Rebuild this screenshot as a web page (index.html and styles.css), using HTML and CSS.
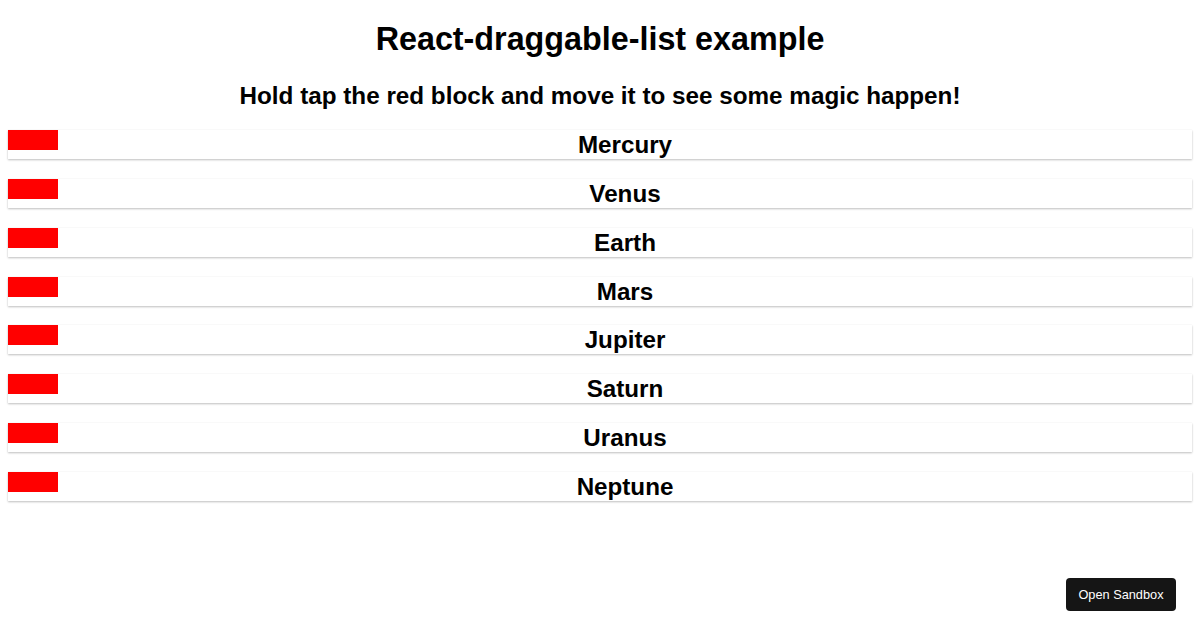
FILE: index.html
```html
<!DOCTYPE html>
<html>
<head>
<meta charset="utf-8">
<link rel="stylesheet" href="styles.css">
</head>
<body>
<h1 class="title">React-draggable-list example</h1>
<h2 class="subtitle">Hold tap the red block and move it to see some magic happen!</h2>
<div class="list">
  <div class="item"><span class="handle"></span><span class="name">Mercury</span></div>
  <div class="item"><span class="handle"></span><span class="name">Venus</span></div>
  <div class="item"><span class="handle"></span><span class="name">Earth</span></div>
  <div class="item"><span class="handle"></span><span class="name">Mars</span></div>
  <div class="item"><span class="handle"></span><span class="name">Jupiter</span></div>
  <div class="item"><span class="handle"></span><span class="name">Saturn</span></div>
  <div class="item"><span class="handle"></span><span class="name">Uranus</span></div>
  <div class="item"><span class="handle"></span><span class="name">Neptune</span></div>
</div>
<a class="sandbox">Open Sandbox</a>
</body>
</html>
```

FILE: styles.css
```css
html, body {
  margin: 0;
  padding: 0;
  background: #fff;
}
body {
  padding: 0 8px 20px;
  font-family: "Liberation Sans", Arial, sans-serif;
  color: #000;
}
.title {
  margin: 21px 0 0;
  font-size: 32.3px;
  line-height: 37px;
  text-align: center;
  font-weight: bold;
}
.subtitle {
  margin: 24px 0 0;
  font-size: 24.25px;
  line-height: 28px;
  text-align: center;
  font-weight: bold;
}
.list {
  margin-top: 20px;
  margin-bottom: 10px;
  display: flex;
  flex-direction: column;
  gap: 19.86px;
}
.item {
  height: 29px;
  background: #fff;
  box-shadow: 0 1px 2px rgba(0, 0, 0, 0.25), 0 0 1px rgba(0, 0, 0, 0.06);
  display: flex;
  align-items: flex-start;
}
.handle {
  flex: none;
  width: 50px;
  height: 20px;
  background: #ff0000;
}
.name {
  flex: 1;
  text-align: center;
  font-size: 24.2px;
  font-weight: bold;
  line-height: 28px;
  margin-top: 1px;
}
.sandbox {
  position: fixed;
  right: 24px;
  bottom: 19px;
  height: 33px;
  width: 110px;
  background: #151515;
  color: #fff;
  border-radius: 4px;
  font-size: 12.75px;
  display: flex;
  align-items: center;
  justify-content: center;
}
```
